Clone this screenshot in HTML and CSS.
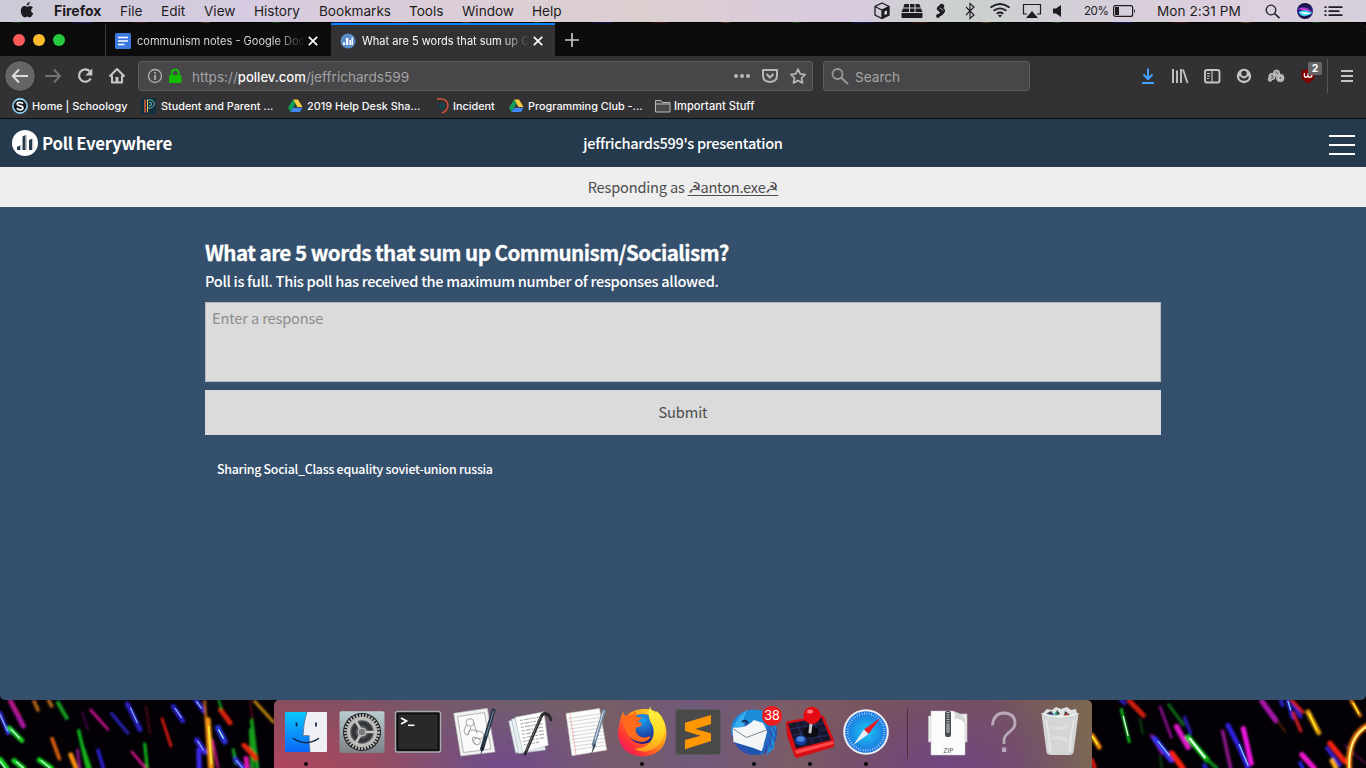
FILE: index.html
```html
<!DOCTYPE html>
<html lang="en">
<head>
<meta charset="utf-8">
<title>Poll Everywhere</title>
<link rel="stylesheet" href="styles.css">
</head>
<body>
<header class="menubar">
  <svg class="apple" width="14" height="16" viewBox="0 0 14 16"><path fill="#1e1c22" d="M9.8.1c.1 1.8-1.4 3.5-3.1 3.5C6.500 1.900 8 .3 9.800.1zM7 4.700c.8 0 1.700-.8 3-.8 1.200 0 2.200.6 2.900 1.500-2.600 1.500-2.200 4.900.4 5.900-.5 1.500-1.900 4.100-3.400 4.100-1 0-1.500-.6-2.600-.6s-1.700.6-2.600.6C2.900 15.400.8 12.200.8 9c0-3.200 1.900-5 3.800-5 1.100 0 1.700.7 2.400.7z"/></svg>
  <nav class="menus"><b style="width:66px">Firefox</b><span style="width:41px">File</span><span style="width:43px">Edit</span><span style="width:50px">View</span><span style="width:65px">History</span><span style="width:90px">Bookmarks</span><span style="width:53px">Tools</span><span style="width:70px">Window</span><span>Help</span></nav>
  <div class="status">
    <svg width="32" height="22"><path d="M16 3l7 3.500v8.500l-7 3.500-7-3.500V6.500zM9 6.500l7 3.500 7-3.500M16 10v8" fill="none" stroke="#1e1c22" stroke-width="1.300"/><path d="M16 10l7-3.500v8.500l-7 3.500z" fill="#1e1c22"/><path d="M18.500 11.500l2.500-1v3.500l-2.500 1z" fill="#ddd"/></svg>
    <svg width="28" height="22"><path d="M6.500 4h4.500v3.500H5.300zM12 4h4.500v3.500H12zM17.500 4h3.700l1.500 3.500h-5.200zM5 8.500h6V12H3.500zM12 8.500h4.500V12H12zM17.500 8.500H23l1.500 3.500h-7zM3.500 13h21v4q0 1-1 1h-19q-1 0-1-1z" fill="#1e1c22"/></svg>
    <svg width="29" height="22"><path d="M15.500 3.300L11 7.500q-1 2 1 3.300l2.200 1.400-2.700 2.800 2 1.500q3.500-1 5.500-5 .5-2.500-2-3.500l-1.500-.7z" fill="#1e1c22"/><circle cx="16" cy="6.300" r="2.300" fill="#1e1c22"/><circle cx="12" cy="16" r="1.900" fill="#1e1c22"/><path d="M13.500 7.800l4 2.600" stroke="#ccc" stroke-width=".7"/></svg>
    <svg width="30" height="22"><path d="M11 7l8 8-4 3.500V3.500L19 7l-8 8" fill="none" stroke="#1e1c22" stroke-width="1.100"/></svg>
    <svg width="30" height="22"><g fill="none" stroke="#1e1c22" stroke-width="1.800"><path d="M5.500 7.500q9.500-7 19 0M8.700 10.700q6.300-4.800 12.600 0M11.700 13.700q3.300-2.400 6.600 0"/></g><path d="M13 15.300q2-1.200 4 0L15 17.500z" fill="#1e1c22"/></svg>
    <svg width="33" height="22"><path d="M12 14H8.500V4.500h17V14H22" fill="none" stroke="#1e1c22" stroke-width="1.200"/><path d="M17 11l6 7H11z" fill="#1e1c22"/></svg>
    <svg width="20" height="22"><path d="M5 8.500h3l5-3.500v12l-5-3.500H5z" fill="#1e1c22"/></svg>
    <span class="pct">20%</span>
    <svg class="batt" width="24" height="22"><rect x=".6" y="5.600" width="19" height="10.800" rx="2" fill="none" stroke="#1e1c22" stroke-width="1.200"/><rect x="2" y="7" width="4" height="8" fill="#1e1c22"/><path d="M21 9q2 2 0 4z" fill="#1e1c22"/></svg>
    <span class="clock">Mon 2:31 PM</span>
    <svg width="30" height="22"><circle cx="14" cy="10" r="4.800" fill="none" stroke="#1e1c22" stroke-width="1.300"/><path d="M17.500 13.500l5 4.700" stroke="#1e1c22" stroke-width="1.600"/></svg>
    <svg class="siri" width="30" height="22"><defs><linearGradient id="si" x1="0" y1="0" x2="0" y2="1"><stop offset="0" stop-color="#151035"/><stop offset=".5" stop-color="#2b1d8c"/><stop offset="1" stop-color="#180c3c"/></linearGradient></defs><circle cx="17" cy="11" r="8" fill="url(#si)"/><path d="M10 9q7-4 14 3-7 0-14-3z" fill="#b63cc9"/><path d="M10.500 12q7-4 14 1-7 5-12 2z" fill="#42d6ef"/><path d="M12 12.500q5-1 11 1-6 2-11-1z" fill="#fff"/></svg>
    <svg width="30" height="22"><path d="M5 7h2m2 0h14M5 11h2m2 0h11M5 15h2m2 0h14" transform="translate(.5 .2)" stroke="#1e1c22" stroke-width="1.800"/></svg>
  </div>
</header>
<div class="specks"></div>

<div class="window">
  <div class="tabs">
    <div class="lights"><i></i><i></i><i></i></div>
    <div class="tab">
      <svg width="16" height="16"><rect width="16" height="16" rx="1.500" fill="#3b78e0"/><path d="M3 4.500h10M3 8h10M3 11.500h6.500" stroke="#fff" stroke-width="1.500"/></svg>
      <span class="label">communism notes - Google Doc</span>
      <svg class="x" width="10" height="10"><path d="M.8.8l8.400 8.400M9.200.8L.8 9.200" stroke="#fff" stroke-width="1.700"/></svg>
    </div>
    <div class="tab on">
      <svg width="16" height="16"><circle cx="8" cy="8" r="7.500" fill="#5b8dc9"/><path d="M3 9.500h2V12H3zM6 5h2.300v7H6zM9.500 7H11v5H9.500zM11.500 4.500H13V12h-1.500z" fill="#fff"/></svg>
      <span class="label">What are 5 words that sum up C</span>
      <svg class="x" width="10" height="10"><path d="M.8.8l8.400 8.400M9.200.8L.8 9.200" stroke="#fff" stroke-width="1.700"/></svg>
    </div>
    <svg class="plus" width="14" height="14"><path d="M7 0v14M0 7h14" stroke="#c8c8ca" stroke-width="1.700"/></svg>
  </div>

  <div class="toolbar">
    <svg class="back" width="33" height="40"><circle cx="16" cy="20" r="15.500" fill="#656567" stroke="#232325"/><path d="M24 20H9.500M15 13.500L8.800 20l6.200 6.500" fill="none" stroke="#ddd" stroke-width="2"/></svg>
    <svg width="32" height="40"><path d="M8 20h14.500M17 13.500l6 6.500-6 6.500" fill="none" stroke="#727274" stroke-width="2"/></svg>
    <svg width="32" height="40"><path d="M20.800 15.300A6.200 6.200 0 1 0 21.700 22.500" fill="none" stroke="#c7c7c9" stroke-width="2.200"/><path d="M23.300 12.500v7h-7z" fill="#c7c7c9"/></svg>
    <svg width="32" height="40"><path d="M8.500 20.500L16 13l7.500 7.500M11 19.500V26.500h10V19.500" fill="none" stroke="#c7c7c9" stroke-width="2.100" stroke-linejoin="round"/><path d="M14.500 21h3v5.500h-3z" fill="#c7c7c9"/></svg>
    <div class="url">
      <svg width="50" height="28"><g fill="none" stroke="#b1b1b3" stroke-width="1.300"><circle cx="16" cy="14" r="6.500"/></g><path d="M15.200 10h1.700v1.800h-1.700zM15.200 13h1.700v5h-1.700z" fill="#b1b1b3"/><rect x="30" y="13" width="12.500" height="8" rx="1" fill="#12bc00"/><path d="M32.700 14V11q0-3.300 3.500-3.300T39.700 11v3" fill="none" stroke="#12bc00" stroke-width="2"/></svg>
      <span class="addr">https://<b>pollev.com</b>/jeffrichards599</span>
      <svg class="acts" width="80" height="28"><g fill="#b8b8ba"><circle cx="3" cy="14" r="2"/><circle cx="9" cy="14" r="2"/><circle cx="15" cy="14" r="2"/></g><path d="M30 8h14v5.500q0 6-7 6.500-7-.5-7-6.500z" fill="none" stroke="#b8b8ba" stroke-width="2" stroke-linejoin="round"/><path d="M33.500 12l3.500 3.500 3.500-3.500" fill="none" stroke="#b8b8ba" stroke-width="2"/><path d="M65 7.200l2.200 4.700 5 .6-3.700 3.500 1 5-4.500-2.500-4.500 2.500 1-5-3.700-3.500 5-.6z" fill="none" stroke="#b8b8ba" stroke-width="1.700" stroke-linejoin="round"/></svg>
    </div>
    <div class="search"><svg width="31" height="28"><circle cx="13.500" cy="12" r="5" fill="none" stroke="#98989a" stroke-width="1.800"/><path d="M17 15.500l7 6.500" stroke="#98989a" stroke-width="2.200"/></svg><span>Search</span></div>
    <div class="tools">
      <svg width="32" height="40"><path d="M16 12.500v10M11.500 18.500l4.500 4.500 4.500-4.500M10 27h12" fill="none" stroke="#45a1ff" stroke-width="2"/></svg>
      <svg width="32" height="40"><path d="M9 13v14M13 14.500V27M17 13v14" stroke="#c4c4c6" stroke-width="1.900"/><path d="M19 13.500L23.500 27" stroke="#c4c4c6" stroke-width="1.800"/></svg>
      <svg width="32" height="40"><rect x="9" y="14" width="14.500" height="12.500" rx="2" fill="none" stroke="#c4c4c6" stroke-width="1.900"/><path d="M16 14v12M11 17.500h3M11 20h3M11 22.500h2" stroke="#c4c4c6" stroke-width="1.200"/></svg>
      <svg width="32" height="40"><circle cx="16" cy="20" r="7.200" fill="#c4c4c6"/><circle cx="16" cy="17.500" r="2.700" fill="#323234"/><path d="M10.800 20.200q.8 4.600 5.200 4.600t5.200-4.600l-2.200.6q-1 1.700-3 1.700t-3-1.700z" fill="#323234"/></svg>
      <svg width="32" height="40"><g fill="#aaaaac" stroke="#c4c4c6"><circle cx="16.500" cy="17" r="3"/><circle cx="12" cy="20.500" r="3.200"/><circle cx="10" cy="23.500" r="1.800"/><circle cx="20.300" cy="22" r="3.700"/></g><circle cx="20.300" cy="22" r="1.700" fill="#666" stroke="#ddd"/><path d="M11 19.500q2-1 2 1.500t-2 1.500M15.500 16q2-.5 2 2" stroke="#666" fill="none"/></svg>
      <svg width="32" height="40"><path d="M16 12.500q3 2 6.500 2.200v4.500q0 5-6.500 8.300-6.500-3.300-6.500-8.300v-4.500q3.500-.2 6.500-2.200z" fill="#800000"/><path d="M12.300 17v2.200q0 2 1.800 2t1.800-2V17.500m0 1.700q0 2 2 2t2-2-1.800-2" fill="none" stroke="#fff" stroke-width="1.200"/><rect x="16" y="6" width="14" height="13" rx="1.500" fill="#656567"/><text class="badge" x="23" y="16" text-anchor="middle">2</text></svg>
      <i class="div"></i>
      <svg width="32" height="40"><path d="M10 15h12M10 20h12M10 25h12" stroke="#c7c7c9" stroke-width="2"/></svg>
    </div>
  </div>

  <div class="bookmarks">
    <a style="width:129px"><svg width="20" height="16"><circle cx="8" cy="8" r="7.100" fill="#16181b" stroke="#8fd6f5" stroke-width="1.600"/><path d="M11 5.700Q9.500 4.200 7.500 4.300 5 4.500 5.200 6.200 5.400 7.500 8 7.900q2.900.4 2.900 2.100-.1 1.700-2.900 1.800Q6 11.700 4.800 10.300" fill="none" stroke="#fff" stroke-width="1.700"/></svg>Home | Schoology</a>
    <a style="width:146px"><svg width="20" height="16"><rect x="-.5" width="15.500" height="16" fill="#12303f"/><path d="M4 1.500v13" stroke="#e8623d" stroke-width="1.500"/><path d="M6.500 1.500v13" stroke="#f2c14e"/><path d="M7 2h3q3.500 1 3.500 3.800T10 10H7M8 4.500h2q1.500 1.500 0 3H8" fill="none" stroke="#6fb7a5"/></svg>Student and Parent ...</a>
    <a style="width:146px"><svg width="20" height="16"><path d="M6 1.500h5L15.500 9h-5z" fill="#ffcd40"/><path d="M6 1.500L8.500 5.700 3.500 14 1 9.800z" fill="#0f9d58"/><path d="M6 9.800h9.500L13 14H3.500z" fill="#4285f4"/></svg>2019 Help Desk Sha...</a>
    <a style="width:75px"><svg width="20" height="16"><path d="M4 1q11-1 11 7-.5 5-6 6.800" fill="none" stroke="#f0553a" stroke-width="1.300"/><path d="M4 5q3 2 6-.5l2 3q0 3-3.500 4Q5 9.500 4 5z" fill="#17434b"/></svg>Incident</a>
    <a style="width:146px"><svg width="20" height="16"><path d="M6 1.500h5L15.500 9h-5z" fill="#ffcd40"/><path d="M6 1.500L8.500 5.700 3.500 14 1 9.800z" fill="#0f9d58"/><path d="M6 9.800h9.500L13 14H3.500z" fill="#4285f4"/></svg>Programming Club -...</a>
    <a class="wide"><svg width="20" height="16"><path d="M1.500 14V2.500h5.500l1.500 2h7.500V14zM1.500 6H16" fill="#4a4a4c" stroke="#b9b9bb"/></svg>Important Stuff</a>
  </div>

  <div class="pollbar">
    <div class="brand"><svg width="26" height="26"><circle cx="13" cy="13" r="13" fill="#fff"/><path d="M5 17l3-1.500V20H5zM10.500 6.500l3-1.500v15h-3zM17 10l3-1.200V20h-3z" fill="#263a4d"/><path d="M8.700 15v5M14.300 5v15M20.800 8.500V20" stroke="#8995a0" stroke-width=".7"/></svg><span>Poll Everywhere</span></div>
    <div class="title">jeffrichards599's presentation</div>
    <div class="burger"><i></i><i></i><i></i></div>
  </div>
  <div class="who"><span class="as">Responding as&nbsp;</span><a>☭anton.exe☭</a></div>
  <main class="poll">
    <h1>What are 5 words that sum up Communism/Socialism?</h1>
    <p class="full">Poll is full. This poll has received the maximum number of responses allowed.</p>
    <div class="entry">Enter a response</div>
    <div class="submit">Submit</div>
    <p class="words">Sharing Social_Class equality soviet-union russia</p>
  </main>
</div>

<footer class="desk">
  <svg class="streaks" width="1366" height="68">
    <defs><filter id="g" x="-5%" y="-20%" width="110%" height="140%"><feGaussianBlur stdDeviation="2.600"/></filter><filter id="h" x="-5%" y="-20%" width="110%" height="140%"><feGaussianBlur stdDeviation="1"/></filter></defs>
    <g transform="translate(0,-10) scale(.33333)" stroke-linecap="round" fill="none">
      <g filter="url(#g)">
        <path d="M32 34L70 108" stroke="#a818a0" stroke-width="15"/><path d="M28 30L60 75" stroke="#c81a60" stroke-width="5"/>
        <path d="M0 68L24 130" stroke="#3b30e8" stroke-width="11"/><path d="M28 114L66 152" stroke="#20d828" stroke-width="14"/>
        <path d="M102 34L114 60M146 32L155 48" stroke="#b06414" stroke-width="11"/><path d="M174 38L200 84" stroke="#159c20" stroke-width="12"/>
        <path d="M246 66L264 118" stroke="#4c0c50" stroke-width="5"/><path d="M272 60L324 118" stroke="#c8148c" stroke-width="8"/>
        <path d="M334 70L384 130" stroke="#2a20b8" stroke-width="9"/><path d="M382 42L420 118" stroke="#2a20c0" stroke-width="15"/>
        <path d="M438 50L450 130" stroke="#58101c" stroke-width="5"/><path d="M486 86L513 168" stroke="#e01c10" stroke-width="8"/>
        <path d="M520 50L548 92M588 30L610 62" stroke="#2c20c8" stroke-width="15"/><path d="M156 146L178 206" stroke="#e06010" stroke-width="11"/>
        <path d="M236 122L262 234M248 170L270 234" stroke="#12b81c" stroke-width="10"/><path d="M212 194L228 234" stroke="#ff9010" stroke-width="14"/><path d="M232 180L240 234" stroke="#a0149c" stroke-width="7"/>
        <path d="M294 180L310 234" stroke="#2a20d8" stroke-width="10"/><path d="M434 162L442 234" stroke="#12b81c" stroke-width="9"/><path d="M396 186L436 234" stroke="#d8148c" stroke-width="8"/>
        <path d="M590 150L614 186M596 180L598 234" stroke="#3a28e8" stroke-width="15"/><path d="M614 34L628 232" stroke="#b86010" stroke-width="8"/><path d="M624 90L634 232" stroke="#f89818" stroke-width="16"/><path d="M638 150L654 232" stroke="#c81484" stroke-width="7"/>
        <path d="M662 60L690 98" stroke="#d8200c" stroke-width="15"/><path d="M654 114L674 154" stroke="#2c34e0" stroke-width="18"/><path d="M656 30L664 56" stroke="#10a01c" stroke-width="7"/>
        <path d="M764 34L820 96" stroke="#c08410" stroke-width="9"/><path d="M750 30L758 90" stroke="#5c0c14" stroke-width="5"/><path d="M755 92L772 234M752 120L758 234" stroke="#12a01c" stroke-width="11"/><path d="M732 166L768 204" stroke="#e82810" stroke-width="15"/>
        <path d="M700 180L708 220" stroke="#159c20" stroke-width="10"/><path d="M706 208L730 234" stroke="#3830e8" stroke-width="14"/><path d="M738 204L742 234" stroke="#e014b0" stroke-width="14"/>
        <path d="M0 208L20 234M42 212L70 234M118 210L154 234" stroke="#18e020" stroke-width="15"/>
      </g>
      <g filter="url(#h)" stroke="#b8ffd8" stroke-width="4"><path d="M34 118L58 144M656 120L670 144M0 214L14 232M50 216L70 234M124 212L150 234"/><path d="M0 74L22 122M392 54L412 98M526 56L544 82M594 154L610 180M590 36L604 54M710 212L726 232" stroke="#80a8f8"/><path d="M626 110L634 220" stroke="#ffe030" stroke-width="6"/></g>
    </g>
    <g transform="translate(1086,-10) scale(.33333)" stroke-linecap="round" fill="none">
      <g filter="url(#g)">
        <path d="M106 58L130 156" stroke="#12c41c" stroke-width="8"/><path d="M130 32L172 76" stroke="#d01c10" stroke-width="15"/><path d="M104 30L116 40" stroke="#2a20c0" stroke-width="11"/>
        <path d="M222 50L256 142" stroke="#8c1088" stroke-width="8"/><path d="M248 44L292 104" stroke="#0c6c14" stroke-width="9"/><path d="M296 82L314 130" stroke="#2a20c0" stroke-width="9"/>
        <path d="M272 110L306 172" stroke="#e014cc" stroke-width="16"/><path d="M196 136L228 190" stroke="#8c14a0" stroke-width="9"/><path d="M206 146L256 210" stroke="#3a30f0" stroke-width="17"/>
        <path d="M306 142L364 210" stroke="#18d820" stroke-width="16"/><path d="M364 210L392 234" stroke="#0c8c14" stroke-width="10"/><path d="M258 190L290 234" stroke="#f82010" stroke-width="17"/>
        <path d="M162 90L170 130M222 200L228 234" stroke="#083c0c" stroke-width="7"/><path d="M410 124L434 234" stroke="#8c1488" stroke-width="11"/><path d="M472 116L496 220" stroke="#f014e0" stroke-width="15"/><path d="M426 106L460 172L486 234" stroke="#3020e8" stroke-width="14"/>
        <path d="M528 34L570 92" stroke="#a814a8" stroke-width="16"/><path d="M574 92L598 126" stroke="#60200c" stroke-width="5"/><path d="M604 30L620 84M584 30L590 46M622 44L644 80" stroke="#2a24d0" stroke-width="11"/><path d="M616 30L650 66M622 70L644 122" stroke="#d01c20" stroke-width="10"/>
        <path d="M666 66L698 128" stroke="#e8a010" stroke-width="15"/><path d="M796 32L822 76" stroke="#e87c10" stroke-width="11"/><path d="M18 136L40 172" stroke="#ff9010" stroke-width="14"/><path d="M18 210L26 234" stroke="#e01810" stroke-width="12"/>
        <path d="M648 194L684 234" stroke="#f014d0" stroke-width="16"/><path d="M642 218L650 234M354 226L360 234" stroke="#2a24f0" stroke-width="10"/><path d="M722 174L762 226" stroke="#3020e0" stroke-width="10"/><path d="M732 160L776 214" stroke="#f82010" stroke-width="16"/><path d="M738 212L750 234" stroke="#ffb010" stroke-width="14"/>
        <path d="M776 166L838 220" stroke="#580c50" stroke-width="5"/><path d="M846 106Q782 140 790 240" stroke="#f07808" stroke-width="17"/>
      </g>
      <g filter="url(#h)" stroke="#d8ffe0" stroke-width="4"><path d="M112 80L126 136"/><path d="M216 154L250 196M460 164L486 226M606 34L614 60" stroke="#80c8ff"/><path d="M312 146L356 202" stroke-width="7"/><path d="M848 106Q784 140 790 240" stroke="#fff080" stroke-width="6"/><path d="M670 72L692 120M802 40L818 70M20 140L34 162" stroke="#ffe820" stroke-width="5"/></g>
    </g>
  </svg>
  <div class="dock">
    <svg width="56" height="68"><defs><linearGradient id="fb" x1="0" y1="0" x2="0" y2="1"><stop offset="0" stop-color="#0cc8fb"/><stop offset="1" stop-color="#0a66fa"/></linearGradient><linearGradient id="mt" x1="0" y1="0" x2="0" y2="1"><stop offset="0" stop-color="#b9cdd0"/><stop offset="1" stop-color="#7d8288"/></linearGradient></defs><rect x="7" y="12" width="42" height="40" rx="1" fill="url(#fb)"/><path d="M29 12h19q1 0 1 1v38q0 1-1 1H32q-1.200-8-1-16h-6Q25.500 22 29 12z" fill="#eef0f6"/><path d="M29 12Q25.500 22 25 35.500h6.200Q31 43 32 52" fill="none" stroke="#46607c" stroke-width=".7"/><path d="M18.500 22.500v4M38 22.500v4" stroke="#10243c" stroke-width="1.700"/><path d="M15.500 38.500q12.500 8.500 25 0" fill="none" stroke="#10243c" stroke-width="1.400" stroke-linecap="round"/><circle class="run" cx="28" cy="64" r="2"/></svg>
    <svg width="56" height="68"><rect x="5.500" y="11.200" width="45" height="41.800" rx="2" fill="url(#mt)"/><circle cx="28" cy="32" r="19" fill="#1f2023"/><circle cx="28" cy="32" r="16.500" fill="none" stroke="#b9b9b7" stroke-width="3" stroke-dasharray="1.700 1.400"/><circle cx="28" cy="32" r="13.500" fill="#55585c" stroke="#bdbdbb" stroke-width="3.400"/><circle cx="28" cy="32" r="8.500" fill="none" stroke="#343639" stroke-width="4"/><path d="M28 32L21.500 20.500M28 32h13M28 32l-6.500 11.500" stroke="#c4c4c2" stroke-width="2.600"/><circle cx="28" cy="32" r="4" fill="#7b7c7e" stroke="#ccc"/></svg>
    <svg width="56" height="68"><rect x="5.500" y="11.500" width="45" height="40.500" rx="2" fill="#111" stroke="#a5adb1" stroke-width="1.400"/><rect x="8.500" y="14.500" width="39" height="34.500" fill="#292929"/><path d="M11 18l5.500 3-5.500 3" fill="none" stroke="#fff" stroke-width="1.700"/><path d="M18 25.300h6.500" stroke="#fff" stroke-width="1.500"/></svg>
    <svg width="56" height="68"><path d="M7.700 13.300l33.600-5L49 52l-34.300 4z" fill="#f3f3f3" stroke="#bbb" stroke-width=".6"/><path d="M11.500 16.500l27-4 6.500 36.500-27.500 3.500z" fill="#fafafa" stroke="#999" stroke-width=".7"/><g fill="none" stroke="#999" stroke-width=".9"><circle cx="24" cy="22.500" r="3.800"/><path d="M27.500 21.500l3.500 12M20.500 24l-2.500 7q0 4 4 4l3-8"/><path d="M22 35q0-6 5-5l9 2q4 4-1 7l-8-2q-2 5 3 7"/><circle cx="31" cy="41.500" r="3.400"/></g><path d="M47.500 10.500L36 49" stroke="#263543" stroke-width="4" stroke-linecap="round"/><path d="M36.500 46l-2.300 9.500 4-8z" fill="#17202a"/><path d="M47.500 11L40 36" stroke="#7890a0"/></svg>
    <svg width="56" height="68"><path d="M6.700 21l24-5 8 34-25 3z" fill="#ecf3f5" stroke="#a9b4b8" stroke-width=".6"/><path d="M9.500 19l27-4 7 35-27 3.500z" fill="#e5eef0" stroke="#a9b4b8" stroke-width=".6"/><path d="M13 17.300l29-5.600 4.300 33.500L21 53z" fill="#fff" stroke="#a9b4b8" stroke-width=".6"/><path d="M18 20.500l22-4M18.500 24l22-4M19 27.500l22-4M19.500 31l22-4M20 34.500l22-4M20.500 38l22-4M21 41.500l22-4M21.500 45l16-3" stroke="#aaa" stroke-width="1.100" stroke-dasharray="3 1 5 .8 2 1"/><path d="M23 54l16-37q2-4.500 5.500-3t4.500 6" fill="none" stroke="#2a2a2c" stroke-width="3" stroke-linecap="round"/><path d="M24 51l15-35" stroke="#77777a" stroke-width=".8"/></svg>
    <svg width="56" height="68"><path d="M8 13.500l33.500-5 7.200 41.500L14 55.700z" fill="#fcfcfa" stroke="#ccc" stroke-width=".6"/><path d="M10 18.500l32-4.600M10.600 22l32-4.600M11.200 25.500l32-4.600M11.800 29l32-4.600M12.400 32.500l32-4.600M13 36l32-4.600M13.600 39.500l32-4.600M14.200 43l32-4.600M14.800 46.500l32-4.600M15.400 50l32-4.600" stroke="#b7bcc4" stroke-width=".6"/><path d="M12 13l6 42" stroke="#efa2a2" stroke-width=".7"/><path d="M46 11L35.500 45" stroke="#71879c" stroke-width="3.700" stroke-linecap="round"/><path d="M36 43l-3 12 5-10z" fill="#3b4754"/><path d="M45.500 11L37 40" stroke="#d3e2ee"/></svg>
    <svg width="56" height="68"><defs><linearGradient id="ff" x1="1" y1="0" x2="0" y2="1"><stop offset=".1" stop-color="#ffe826"/><stop offset=".45" stop-color="#ff8a16"/><stop offset=".75" stop-color="#ff2d38"/><stop offset="1" stop-color="#e0118c"/></linearGradient><linearGradient id="fy" x1="0" y1="0" x2="0" y2="1"><stop offset="0" stop-color="#fff44a"/><stop offset=".6" stop-color="#ffd91f"/><stop offset="1" stop-color="#ff9a1a"/></linearGradient><radialGradient id="gb" cx=".5" cy=".2" r=".8"><stop offset="0" stop-color="#1ba0f0"/><stop offset="1" stop-color="#201a80"/></radialGradient></defs><path d="M9 11.500q.5 3 2.500 5 4-4.500 11-6.500 14-3 23 4 7 8 7 20Q51 55 28.500 56.500 5.500 55 4 34q0-10 5-22.500z" fill="url(#ff)"/><circle cx="28.500" cy="29" r="15" fill="url(#gb)"/><path d="M10 17.500q4-5 8-2 .5-2.500 4-4-1 4 1 5.500l5 .5-4 4 4 2q-1 4-6 4-1.500 5 3 8.500 4 2.500 8 1 2-1 4 0-4 5-10 5-11-1-15-11-3-7-2-13.500z" fill="#ff6a1c"/><path d="M36 6q0 3.500 5.500 8 1-1 1-3 5 4 7.500 12 2 8-1 15-5 12-17 13.500-7 .5-12-3 10 1 16-6 6-8 2.500-17-6-8-2.500-19.500z" fill="url(#fy)"/><circle class="run" cx="28" cy="64" r="2"/></svg>
    <svg width="56" height="68"><rect x="5.500" y="9.500" width="45" height="45" rx="2.500" fill="#4a4a4a" stroke="#5b5b5b" stroke-width=".8"/><path d="M15 22.700L41 15v9l-15.700 5L41 33.300V41l-26 8.300V40l15.700-4.300L15 31z" fill="#ff9800"/></svg>
    <svg width="56" height="68"><circle cx="28.500" cy="32.500" r="22.500" fill="#1d55ae"/><path d="M5 34Q4 14 25 9.500 42 8 50 26l-2 22-8 8q4-10 2-18L20 22q-8 0-15 12z" fill="#1d8bd8"/><path d="M6 36Q8 18 22 10q-7 9-3 15z" fill="#3caef0"/><path d="M6.500 27.500Q20 29 28 20l9 3 4 8-3.500 21-10-4-20-6z" fill="#f4f5f7"/><path d="M6.500 28.500l14 9 21-8" fill="none" stroke="#70787e" stroke-width=".9"/><path d="M41 21q9 10 3 25-4 9-12 9 5-4 6-12l3-10z" fill="#2468c0"/><path d="M46 26l4 8M44 31l5 10M43 39l3 9M41 45l-2 9" stroke="#42309a" stroke-width=".9"/><path d="M16 22q3-3 6 1" fill="none" stroke="#123257" stroke-width="2"/><path d="M8 42q7 12 18 13-5-6-11-9z" fill="#3050b0"/><circle cx="46" cy="16" r="10" fill="#ec1c1f"/><text class="cnt" x="46" y="20.300" text-anchor="middle">38</text><circle class="run" cx="28" cy="64" r="2"/></svg>
    <svg width="56" height="68"><path d="M4 23q0-1.500 1.500-1.800l34-6q2 0 2.500 1.500L52 40v7L15 58q-2 0-2.500-2L5 36z" fill="#d60e16"/><path d="M13 50.500L51.500 41v3L14 54z" fill="#ff4a4c"/><path d="M6 23.500l33.500-6 9.500 22.500-35 8.500z" fill="#18172c"/><path d="M15 22l8 24M22 21l9 23M31 19l9 23M8 29l34-6M10 35l35-6M12 41l35-6" stroke="#2a3f8a" stroke-width=".6"/><ellipse cx="29" cy="32" rx="8" ry="5.500" fill="#0b0c10"/><path d="M29.500 20L28 32" stroke="#c8c8c8" stroke-width="3" stroke-linecap="round"/><circle cx="30" cy="15.300" r="8.600" fill="#e40c12"/><ellipse cx="28" cy="11.500" rx="3" ry="2" fill="#ff8080"/><ellipse cx="18.700" cy="40.500" rx="6" ry="5" fill="#123c9c"/><ellipse cx="18.700" cy="39" rx="4" ry="2.800" fill="#4a86e0"/><circle class="run" cx="28" cy="64" r="2"/></svg>
    <svg width="56" height="68"><defs><radialGradient id="sf"><stop offset="0" stop-color="#1cc8f2"/><stop offset="1" stop-color="#1b74e0"/></radialGradient></defs><circle cx="28" cy="32" r="22.800" fill="#eef0f2"/><circle cx="28" cy="32" r="20.800" fill="url(#sf)"/><circle cx="28" cy="32" r="18.500" fill="none" stroke="#d6ebfa" stroke-width="2.500" stroke-dasharray=".6 1.820"/><path d="M42 18.300L30.500 34 26 29.500z" fill="#f0161c"/><path d="M15.300 45L26 29.500l4.500 4.500z" fill="#e9edf0"/><circle class="run" cx="28" cy="64" r="2"/></svg>
    <i class="sep"></i>
    <svg width="56" height="68"><path d="M8.500 16h6v26h-6zM37 14h10v28H37z" fill="#ececec" stroke="#bbb" stroke-width=".7"/><path d="M11 11h22l12 12v32H11z" fill="#fbfbfb" stroke="#c8c8c8" stroke-width=".5"/><path d="M33 11l2 3q0 3-1.500 4.500Q42 18 45 24q2-9-12-13z" fill="#d5d5d5"/><rect x="25" y="11" width="6" height="26" rx="2" fill="#4b4e51"/><path d="M28 12v20" stroke="#b9bcbe" stroke-width="3" stroke-dasharray="1 1.300"/><rect x="26.500" y="24" width="3" height="9" rx="1" fill="#8f999d"/><text class="zip" x="28.300" y="52.500" text-anchor="middle">ZIP</text></svg>
    <svg width="56" height="68"><path d="M16.500 25.500q.8-12.500 11.700-12.500 10.800.5 10.800 10.500 0 4-5 8-6 4.500-6 8.500V44" fill="none" stroke="#b9a9b8" stroke-width="2.800"/><rect x="26" y="47.500" width="4.200" height="4.500" fill="#b9a9b8"/></svg>
    <svg width="56" height="68"><path d="M11 13l4-4 5 1 4-3 5 2 6-2 4 3 5-1 1 5-5 5H15z" fill="#dde0e0"/><path d="M14 14l5-3 3 4zM33 11l5 4-6 1zM25 10l3 4-5 2z" fill="#33393d"/><path d="M21 14l3-2 2 3z" fill="#30bba5"/><path d="M31 16l4-3 2 3z" fill="#c13a30"/><path d="M17 16l2-3 3 3z" fill="#4a60b8"/><path d="M9.500 14q18 6 37 0l-5 38q-.5 2.500-4 3H19q-4-.5-4.500-3z" fill="#d4d5d5"/><path d="M9.500 13.500q18.500 6.500 37 0" fill="none" stroke="#f6f6f6" stroke-width="1.300"/><path d="M14 20q4 18 4 32M42 20q-4 16-4 32" fill="none" stroke="#e8e8e8" stroke-width="1.600"/><path d="M19 27q9 4 17-2M20 39q8-4 16 2" fill="none" stroke="#dedfdf" stroke-width="3"/></svg>
  </div>
</footer>
</body>
</html>
```
FILE: styles.css
```css
* { box-sizing: border-box; }
html, body { margin: 0; height: 768px; overflow: hidden; background: #030106; }
body { font-family: Inter, "Liberation Sans", sans-serif; font-size: 13.6px; }
svg { display: block; flex: none; }

.menubar {
  display: flex; height: 22px; align-items: center; color: #1e1c22; padding-left: 20px;
  background: linear-gradient(90deg, #cccad6, #d6cbe0 250px, #dacdd8 420px, #dccfd0 640px, #d8cadf 850px, #cfcfd3 910px, #cbd0cf 980px, #d5cfd9 1090px, #dccfdd 1200px, #d8d0dc);
}
.apple { margin: -2px 20px 0 0; }
.menus { display: flex; line-height: 22px; letter-spacing: -0.02px; }
.menus b { font-size: 14px; font-weight: 700; }
.status { display: flex; margin-left: auto; padding-right: 17px; line-height: 22px; }
.pct { width: 29px; margin-left: 16px; font-size: 11.6px; letter-spacing: -0.5px; }
.batt { margin-right: 20px; }
.clock { width: 100px; white-space: nowrap; letter-spacing: 0.05px; }
.siri { margin-left: 1px; margin-right: 1px; }
.specks {
  height: 1px;
  background: repeating-linear-gradient(90deg, #000 0 12px, #063a0a 14px 19px, #000 22px 70px, #100f58 76px 90px, #000 94px 130px, #400a0a 136px 144px, #000 150px 200px, #482c06 204px 208px, #000 212px 260px);
}

.window { height: 677px; border-radius: 5px; overflow: hidden; display: flex; flex-direction: column; background: #35506c; }
.tabs { display: flex; height: 33px; background: #0c0c0d; align-items: center; flex: none; color: #d8d8da; }
.lights { display: flex; width: 105px; height: 33px; padding: 1px 0 0 13px; gap: 8px; align-items: center; }
.lights i { width: 12px; height: 12px; border-radius: 50%; background: #fc5b57; }
.lights i:nth-child(2) { background: #fdbc2e; }
.lights i:nth-child(3) { background: #27c93f; }
.tab { display: flex; width: 226px; height: 33px; align-items: center; border-left: 1px solid #3b3b3d; border-top: 2px solid transparent; padding-left: 9px; font-size: 11.02px; line-height: 30px; }
.tab.on { width: 224px; background: #323234; border-left: 0; border-top-color: #0a84ff; color: #f9f9fa; }
.label { width: 171px; margin-left: 6px; white-space: nowrap; -webkit-mask-image: linear-gradient(90deg, #000 138px, transparent 168px); mask-image: linear-gradient(90deg, #000 138px, transparent 168px); }
.plus { margin-left: 10px; }

.toolbar { display: flex; height: 40px; background: #323234; flex: none; align-items: center; padding-left: 4px; color: #b1b1b3; }
.url, .search { display: flex; height: 30px; width: 675px; margin-left: 5px; background: #474749; border: 1px solid #5c5c5e; border-radius: 3px; align-items: center; }
.search { width: 207px; margin-left: 10px; }
.addr { margin-left: 3px; line-height: 28px; padding-top: 1px; color: #a3a3a5; }
.addr b { font-weight: 500; font-size: 13.1px; color: #f9f9fa; }
.acts { margin: 0 -1px 0 auto; }
.search span { padding-top: 1px; color: #a6a6a8; }
.tools { display: flex; margin-left: auto; align-items: center; padding-right: 3px; }
.div { width: 1px; height: 34px; margin: 0 3px; background: #57575a; }
.badge { font: 700 10.5px Inter, sans-serif; fill: #fff; }
.bookmarks { display: flex; height: 23px; background: #323234; border-bottom: 1px solid #0c0c0d; padding: 0 0 3px 12px; flex: none; align-items: center; font-size: 10.87px; font-weight: 500; color: #f9f9fa; white-space: nowrap; }
.bookmarks a { display: flex; align-items: center; }
.bookmarks .wide { font-size: 11.15px; }

.pollbar, .who, .poll { font-family: "Noto Sans CJK SC", sans-serif; }
.pollbar { display: grid; grid-template-columns: 1fr auto 1fr; height: 48px; flex: none; background: #263a4d; color: #fff; align-items: center; padding: 0 11px 0 12px; }
.brand { display: flex; gap: 4px; align-items: center; font-size: 16.8px; font-weight: 700; line-height: 26px; letter-spacing: -0.28px; }
.title { font-size: 14.6px; font-weight: 500; line-height: 24px; letter-spacing: -0.3px; margin: -1px 1px 0 0; }
.burger { justify-self: end; width: 26px; display: grid; gap: 7px; padding-top: 3px; }
.burger i { height: 2px; background: #fff; }
.who { display: flex; height: 40px; flex: none; background: #eee; color: #4c4c4e; justify-content: center; font-size: 14.6px; line-height: 39px; letter-spacing: -0.19px; }
.who a { text-decoration: underline; text-underline-offset: 2px; letter-spacing: -0.22px; }
.poll { width: 956px; margin: 30px auto 0; color: #fff; }
.poll h1 { margin: 0; font-size: 20.6px; font-weight: 700; line-height: 30px; letter-spacing: -0.525px; -webkit-text-stroke: 0.3px #fff; }
.full { margin: 0; font-size: 14.6px; font-weight: 500; line-height: 28px; letter-spacing: -0.31px; }
.entry { height: 80px; margin-top: 7px; border: 1px solid #b4bac0; background: #dbdbdb; padding: 3px 6px; font-size: 14.6px; line-height: 24px; letter-spacing: -0.14px; color: #8d8d8d; }
.submit { height: 45px; margin-top: 8px; background: #dbdbdb; color: #4c4c4e; text-align: center; font-size: 14.6px; line-height: 44px; letter-spacing: -0.1px; }
.words { margin: 24px 12px; font-size: 12.4px; font-weight: 500; line-height: 20px; letter-spacing: -0.26px; }

.desk { position: relative; height: 68px; display: flex; justify-content: center; overflow: hidden; }
.streaks { position: absolute; left: 0; top: 0; }
.dock {
  position: relative; display: flex; width: 818px; padding: 0 4px; border-radius: 5px 5px 0 0;
  background:
    radial-gradient(ellipse 200px 80px at 0 100%, #b0465f, transparent),
    radial-gradient(ellipse 130px 70px at 230px 100%, #73498c, transparent),
    radial-gradient(ellipse 150px 80px at 670px 100%, #704580, transparent),
    linear-gradient(90deg, #80505e, #7b5468 120px, #70606a 240px, #775e66 330px, #70597a 420px, #7b5c66 520px, #79545c 600px, #74525f 720px, #7c6852);
}
.run { fill: #0a0608; }
.sep { width: 1px; height: 50px; margin: 9px 12px 0 13px; background: #48303f; }
.cnt { font: 400 12.5px Inter, sans-serif; fill: #fff; }
.zip { font: 400 6.5px Inter, sans-serif; fill: #555; }
```
